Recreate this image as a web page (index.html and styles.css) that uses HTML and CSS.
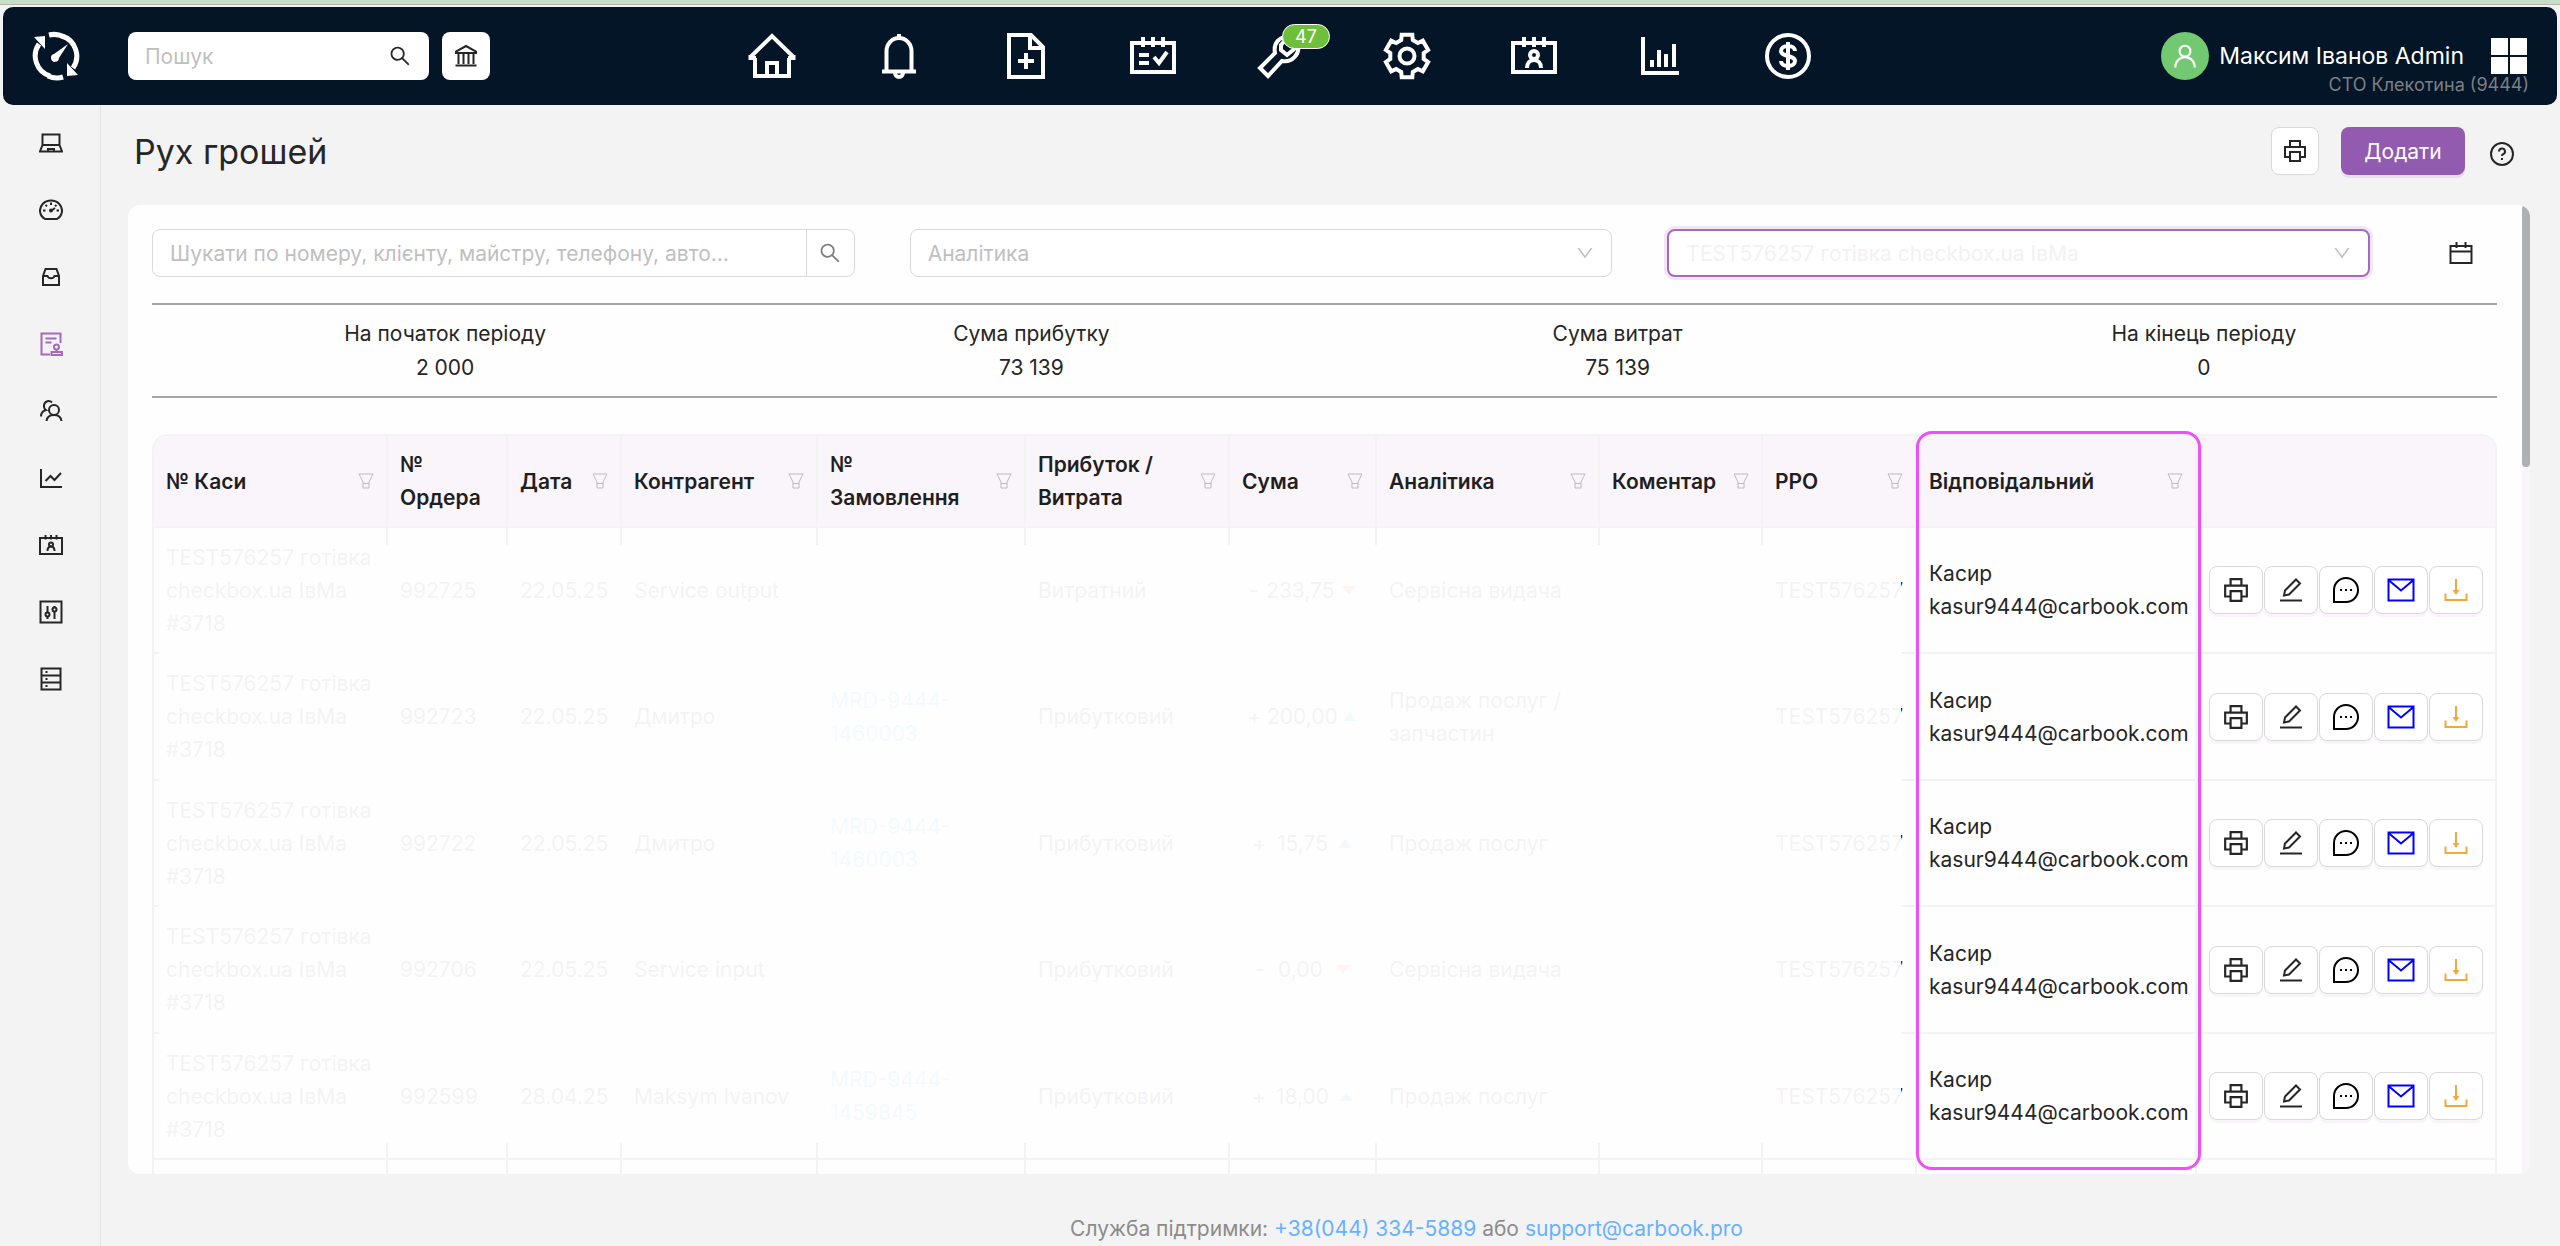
FILE: index.html
```html
<!DOCTYPE html>
<html lang="uk">
<head>
<meta charset="utf-8">
<title>Рух грошей</title>
<link rel="stylesheet" href="styles.css">
</head>
<body>
<svg class="sprite" aria-hidden="true">
  <symbol id="i-search" viewBox="0 0 1024 1024"><path fill="currentColor" d="M909.6 854.5L649.9 594.8C690.2 542.7 712 479 712 412c0-80.2-31.3-155.4-87.9-212.1-56.6-56.7-132-87.9-212.1-87.9s-155.5 31.3-212.1 87.9C143.2 256.5 112 331.8 112 412c0 80.1 31.3 155.5 87.9 212.1C256.5 680.8 331.8 712 412 712c67 0 130.6-21.8 182.7-62l259.7 259.6a8.2 8.2 0 0011.6 0l43.6-43.5a8.2 8.2 0 000-11.6zM570.4 570.4C528 612.7 471.8 636 412 636s-116-23.3-158.4-65.6C211.3 528 188 471.8 188 412s23.3-116.1 65.6-158.4C296 211.3 352.2 188 412 188s116.1 23.2 158.4 65.6S636 352.2 636 412s-23.3 116.1-65.6 158.4z"/></symbol>
  <symbol id="i-down" viewBox="0 0 1024 1024"><path fill="currentColor" d="M884 256h-75c-5.1 0-9.9 2.5-12.9 6.6L512 654.2 227.9 262.6c-3-4.1-7.8-6.6-12.9-6.6h-75c-6.500 0-10.3 7.4-6.5 12.7l352.6 486.1c12.8 17.6 39 17.6 51.7 0l352.6-486.1c3.9-5.3.1-12.7-6.4-12.7z"/></symbol>
  <symbol id="i-bank" viewBox="0 0 24 24"><path d="M2 9V7.500L12 2l10 5.500V9zM4.500 9v11M9.500 9v11M14.500 9v11M19.500 9v11M1.500 21.500h21"/></symbol>
  <symbol id="i-home" viewBox="0 0 48 48"><path d="M7 26v18h34V26M19 44V31h10v13M2.500 25L24 4l21.500 21M2.500 23V26H8M45.500 23V26H40"/></symbol>
  <symbol id="i-bell" viewBox="0 0 48 48"><path d="M11.500 39V19a12.500 13 0 0 1 25 0v20M7 39.500h34M24 2v4M20 41a4 4 0 0 0 8 0"/></symbol>
  <symbol id="i-file" viewBox="0 0 48 48"><path d="M7 3h22l12 12v30H7zM28 3v13h13M24 21v16M16 29h16"/></symbol>
  <symbol id="i-tasks" viewBox="0 0 48 48"><path d="M3 11h42v29H3zM14 5v10M24 5v10M34 5v10M10 23h10M10 31h10M25 25l5 6 8-11"/></symbol>
  <symbol id="i-wrench" viewBox="0 0 48 48"><path d="M12 44L4 36l15-15C17 11 24 4 32 5l-7 8v5l6 5 6-5 5-5c2 9-6 18-16 16z"/></symbol>
  <symbol id="i-gear" viewBox="0 0 48 48"><path d="M18.700 2.700h10.600l.5 5.300 5.100 3 4.900-2.300 5.300 9.200-4.400 3.100v6l4.400 3.100-5.300 9.200-4.900-2.300-5.100 3-.5 5.300H18.700l-.5-5.300-5.100-3-4.900 2.300-5.300-9.200L7.300 27v-6l-4.400-3.100 5.300-9.200 4.900 2.300 5.100-3z"/><circle cx="24" cy="24" r="7.500"/></symbol>
  <symbol id="i-client" viewBox="0 0 48 48"><path d="M3 11h42v29H3zM14 5v10M24 5v10M34 5v10M17 36c0-5 3-8 7-8s7 3 7 8"/><circle cx="24" cy="23" r="4"/></symbol>
  <symbol id="i-bars" viewBox="0 0 48 48"><path d="M6 5v36h36M15 35v-7M22 35V18M29 35V22M37 35V12"/></symbol>
  <symbol id="i-dollar" viewBox="0 0 48 48"><circle cx="24" cy="24" r="21"/><path d="M24 10v28M31 19c0-3-3-5-7-5s-7 2-7 5c0 6 14 4 14 10 0 3-3 5-7 5s-7-2-7-5"/></symbol>
  <symbol id="i-user" viewBox="0 0 24 24"><circle cx="12" cy="7.500" r="5"/><path d="M3 22.500c0-5.500 4-9.500 9-9.500s9 4 9 9.500"/></symbol>
  <symbol id="i-printer" viewBox="0 0 24 24"><path d="M7 8V2h10v6M6.500 18H2V8h20v10h-4.500M7 13h10v9H7z"/></symbol>
  <symbol id="i-help" viewBox="0 0 24 24"><circle cx="12" cy="12" r="11"/><path d="M9 9.500a3 3 0 1 1 4.200 2.700c-.8.4-1.200 1-1.200 1.800M12 16v2"/></symbol>
  <symbol id="i-calendar" viewBox="0 0 24 24"><path d="M1.500 5h21v17h-21zM1.500 10.500h21M7.500 1v6M16.500 1v6"/></symbol>
  <symbol id="i-filter" viewBox="0 0 16 16"><path d="M1 1h14l-4 8v6H5V9zM5 10.500h6"/></symbol>
  <symbol id="i-edit" viewBox="0 0 24 24"><path d="M1 22.500h22M5 17.500l1-5L17 1.500l4 4-11 11z"/></symbol>
  <symbol id="i-chat" viewBox="0 0 28 28"><path d="M2 26h12a12 12 0 1 0-12-12z"/><path d="M8 14h2M13 14h2M18 14h2"/></symbol>
  <symbol id="i-mail" viewBox="0 0 28 28"><path d="M1.500 3.500h25v21h-25zM1.500 4L14 14.500 26.500 4"/></symbol>
  <symbol id="i-download" viewBox="0 0 24 24"><path d="M1.500 15.500V22h21v-6.500M12 1v14"/><path fill="currentColor" stroke="none" d="M8.500 12h7L12 17z"/></symbol>
  <symbol id="i-laptop" viewBox="0 0 24 24"><path d="M3.500 3.500h17V14H3.500zM3.500 14L1 20.500h22L20.500 14M9 20v-2h6v2"/></symbol>
  <symbol id="i-dash" viewBox="0 0 24 24"><path d="M6 21h12a11 10 0 1 0-12 0zM12 13l4-3M4 12.500h2.500M17.500 12.500H20M6.500 7L8 8.200M17.500 7L16 8.200M12 4.500V7"/><circle cx="12" cy="12.500" r="1"/></symbol>
  <symbol id="i-inbox" viewBox="0 0 24 24"><path d="M4 11l2.500-7h11L20 11v9H4zM4 11h4.500c1 3 6 3 7 0H20"/></symbol>
  <symbol id="i-audit" viewBox="0 0 24 24"><path d="M11 22.500H2.500v-21h19V11M6.500 6.500h11M6.500 10.500h6M12.500 20h10.500v3H12.500zM17.500 20v-2.500"/><circle cx="17.500" cy="15" r="2.500"/></symbol>
  <symbol id="i-team" viewBox="0 0 24 24"><circle cx="15" cy="11" r="5"/><path d="M7.500 22c.5-4 3.500-6 7.500-6s7 2 7.500 6M13 3.500C10.500 1 6 2 5 6c-.3 2 .5 4 2 5-3 .8-5 3-5 6.500"/></symbol>
  <symbol id="i-line" viewBox="0 0 24 24"><path d="M2 3v18h21M6.500 15l5-5 4 4 6.500-7"/></symbol>
  <symbol id="i-card" viewBox="0 0 24 24"><path d="M1 5h22v16H1zM6.500 2v4.500M12 2v4.500M17.500 2v4.500M8.500 18c0-3 1.500-4.500 3.500-4.500s3.500 1.500 3.500 4.500"/><circle cx="12" cy="11.500" r="2"/></symbol>
  <symbol id="i-control" viewBox="0 0 24 24"><path d="M1.500 1.500h21v21h-21zM8.500 6v7M8.500 16.500V19M15.500 6v1.500M15.500 11.500V19"/><circle cx="8.500" cy="14.500" r="2"/><circle cx="15.500" cy="9.500" r="2"/></symbol>
  <symbol id="i-db" viewBox="0 0 24 24"><path d="M2.500 1.500h19v21h-19zM2.500 8.500h19M2.500 15.500h19M6.500 5h2M6.500 12h2M6.500 19h2"/></symbol>
</svg>

<div class="browser-edge"></div>

<header class="topbar">
  <div class="top-left">
    <a class="logo" href="#" aria-label="Carbook">
      <svg viewBox="0 0 50 50"><path d="M8 13A21 21 0 0 0 19 45M42 37A21 21 0 0 0 31 5" fill="none" stroke="currentColor" stroke-width="5"/><path d="M18 4a21 21 0 0 1 15 2M32 46a21 21 0 0 1-15-1" fill="none" stroke="currentColor" stroke-width="5"/><path fill="currentColor" d="M3 6l11-1v13zM47 44l-11 1V32zM37 13L28 27a4 4 0 1 1-5-4z"/></svg>
    </a>
    <label class="global-search">
      <input type="text" placeholder="Пошук" aria-label="Пошук">
      <svg class="icon s24"><use href="#i-search"/></svg>
    </label>
    <button class="bank" aria-label="Каса"><svg class="icon s24"><use href="#i-bank"/></svg></button>
  </div>
  <nav class="main-nav">
    <a href="#"><svg class="icon"><use href="#i-home"/></svg></a>
    <a href="#"><svg class="icon"><use href="#i-bell"/></svg></a>
    <a href="#"><svg class="icon"><use href="#i-file"/></svg></a>
    <a href="#"><svg class="icon"><use href="#i-tasks"/></svg></a>
    <a href="#"><svg class="icon"><use href="#i-wrench"/></svg><span class="badge">47</span></a>
    <a href="#"><svg class="icon"><use href="#i-gear"/></svg></a>
    <a href="#"><svg class="icon"><use href="#i-client"/></svg></a>
    <a href="#"><svg class="icon"><use href="#i-bars"/></svg></a>
    <a href="#"><svg class="icon"><use href="#i-dollar"/></svg></a>
  </nav>
  <div class="account">
    <div class="account-row">
      <span class="avatar"><svg class="icon s26"><use href="#i-user"/></svg></span>
      <span class="account-name">Максим Іванов Admin</span>
      <button class="apps" aria-label="Меню"><i></i><i></i><i></i><i></i></button>
    </div>
    <span class="account-sto">СТО Клекотина (9444)</span>
  </div>
</header>

<div class="shell">
  <nav class="sidebar">
    <a href="#"><svg class="icon s24"><use href="#i-laptop"/></svg></a>
    <a href="#"><svg class="icon s24"><use href="#i-dash"/></svg></a>
    <a href="#"><svg class="icon s24"><use href="#i-inbox"/></svg></a>
    <a href="#" class="active"><svg class="icon s24"><use href="#i-audit"/></svg></a>
    <a href="#"><svg class="icon s24"><use href="#i-team"/></svg></a>
    <a href="#"><svg class="icon s24"><use href="#i-line"/></svg></a>
    <a href="#"><svg class="icon s24"><use href="#i-card"/></svg></a>
    <a href="#"><svg class="icon s24"><use href="#i-control"/></svg></a>
    <a href="#"><svg class="icon s24"><use href="#i-db"/></svg></a>
  </nav>

  <div class="page">
    <div class="page-head">
      <h1>Рух грошей</h1>
      <button class="btn print" aria-label="Друк"><svg class="icon s24"><use href="#i-printer"/></svg></button>
      <button class="btn primary">Додати</button>
      <a class="help" href="#" aria-label="Довідка"><svg class="icon s24"><use href="#i-help"/></svg></a>
    </div>

    <main class="card">
      <div class="card-body">
        <div class="filters">
          <div class="search-field">
            <input type="text" placeholder="Шукати по номеру, клієнту, майстру, телефону, авто..." aria-label="Пошук касових ордерів">
            <button aria-label="Шукати"><svg class="icon s24"><use href="#i-search"/></svg></button>
          </div>
          <label class="select"><select aria-label="Аналітика"><option>Аналітика</option></select><svg class="icon s20"><use href="#i-down"/></svg></label>
          <label class="select focused"><select aria-label="Каса"><option>TEST576257 готівка checkbox.ua ІвМа</option></select><svg class="icon s20"><use href="#i-down"/></svg></label>
          <button class="date" aria-label="Період"><svg class="icon s24"><use href="#i-calendar"/></svg></button>
        </div>

        <div class="totals">
          <div>На початок періоду<br>2 000</div>
          <div>Сума прибутку<br>73 139</div>
          <div>Сума витрат<br>75 139</div>
          <div>На кінець періоду<br>0</div>
        </div>

        <div class="table-wrap">
          <table>
            <colgroup><col class="c-cash"><col class="c-order"><col class="c-date"><col class="c-party"><col class="c-job"><col class="c-type"><col class="c-sum"><col class="c-analytics"><col class="c-comment"><col class="c-rro"><col class="c-resp"><col class="c-actions"></colgroup>
            <thead>
              <tr>
                <th><div class="th">№ Каси<svg class="icon filter"><use href="#i-filter"/></svg></div></th>
                <th><div class="th">№ Ордера</div></th>
                <th><div class="th">Дата<svg class="icon filter"><use href="#i-filter"/></svg></div></th>
                <th><div class="th">Контрагент<svg class="icon filter"><use href="#i-filter"/></svg></div></th>
                <th><div class="th"><span>№<br>Замовлення</span><svg class="icon filter"><use href="#i-filter"/></svg></div></th>
                <th><div class="th">Прибуток / Витрата<svg class="icon filter"><use href="#i-filter"/></svg></div></th>
                <th><div class="th">Сума<svg class="icon filter"><use href="#i-filter"/></svg></div></th>
                <th><div class="th">Аналітика<svg class="icon filter"><use href="#i-filter"/></svg></div></th>
                <th><div class="th">Коментар<svg class="icon filter"><use href="#i-filter"/></svg></div></th>
                <th><div class="th">РРО<svg class="icon filter"><use href="#i-filter"/></svg></div></th>
                <th><div class="th">Відповідальний<svg class="icon filter"><use href="#i-filter"/></svg></div></th>
                <th></th>
              </tr>
            </thead>
            <tbody>
              <tr>
                <td>TEST576257 готівка checkbox.ua ІвМа #3718</td><td>992725</td><td>22.05.25</td><td>Service output</td><td></td><td>Витратний</td>
                <td><div class="sum down"><span>-</span><span>233,75</span></div></td><td>Сервісна видача</td><td></td><td>TEST576257</td><td>Касир<br>kasur9444@carbook.com</td>
                <td><div class="actions"><button aria-label="Друк"><svg class="icon s26"><use href="#i-printer"/></svg></button><button aria-label="Редагувати"><svg class="icon s24"><use href="#i-edit"/></svg></button><button class="chat" aria-label="Чат"><svg class="icon s28"><use href="#i-chat"/></svg></button><button class="mail" aria-label="Лист"><svg class="icon s28"><use href="#i-mail"/></svg></button><button class="download" aria-label="Завантажити"><svg class="icon s24"><use href="#i-download"/></svg></button></div></td>
              </tr>
              <tr>
                <td>TEST576257 готівка checkbox.ua ІвМа #3718</td><td>992723</td><td>22.05.25</td><td>Дмитро</td><td><a href="#">MRD-9444-1460003</a></td><td>Прибутковий</td>
                <td><div class="sum up"><span>+</span><span>200,00</span></div></td><td>Продаж послуг / запчастин</td><td></td><td>TEST576257</td><td>Касир<br>kasur9444@carbook.com</td>
                <td><div class="actions"><button aria-label="Друк"><svg class="icon s26"><use href="#i-printer"/></svg></button><button aria-label="Редагувати"><svg class="icon s24"><use href="#i-edit"/></svg></button><button class="chat" aria-label="Чат"><svg class="icon s28"><use href="#i-chat"/></svg></button><button class="mail" aria-label="Лист"><svg class="icon s28"><use href="#i-mail"/></svg></button><button class="download" aria-label="Завантажити"><svg class="icon s24"><use href="#i-download"/></svg></button></div></td>
              </tr>
              <tr>
                <td>TEST576257 готівка checkbox.ua ІвМа #3718</td><td>992722</td><td>22.05.25</td><td>Дмитро</td><td><a href="#">MRD-9444-1460003</a></td><td>Прибутковий</td>
                <td><div class="sum up"><span>+</span><span>15,75</span></div></td><td>Продаж послуг</td><td></td><td>TEST576257</td><td>Касир<br>kasur9444@carbook.com</td>
                <td><div class="actions"><button aria-label="Друк"><svg class="icon s26"><use href="#i-printer"/></svg></button><button aria-label="Редагувати"><svg class="icon s24"><use href="#i-edit"/></svg></button><button class="chat" aria-label="Чат"><svg class="icon s28"><use href="#i-chat"/></svg></button><button class="mail" aria-label="Лист"><svg class="icon s28"><use href="#i-mail"/></svg></button><button class="download" aria-label="Завантажити"><svg class="icon s24"><use href="#i-download"/></svg></button></div></td>
              </tr>
              <tr>
                <td>TEST576257 готівка checkbox.ua ІвМа #3718</td><td>992706</td><td>22.05.25</td><td>Service input</td><td></td><td>Прибутковий</td>
                <td><div class="sum down"><span>-</span><span>0,00</span></div></td><td>Сервісна видача</td><td></td><td>TEST576257</td><td>Касир<br>kasur9444@carbook.com</td>
                <td><div class="actions"><button aria-label="Друк"><svg class="icon s26"><use href="#i-printer"/></svg></button><button aria-label="Редагувати"><svg class="icon s24"><use href="#i-edit"/></svg></button><button class="chat" aria-label="Чат"><svg class="icon s28"><use href="#i-chat"/></svg></button><button class="mail" aria-label="Лист"><svg class="icon s28"><use href="#i-mail"/></svg></button><button class="download" aria-label="Завантажити"><svg class="icon s24"><use href="#i-download"/></svg></button></div></td>
              </tr>
              <tr>
                <td>TEST576257 готівка checkbox.ua ІвМа #3718</td><td>992599</td><td>28.04.25</td><td>Maksym Ivanov</td><td><a href="#">MRD-9444-1459845</a></td><td>Прибутковий</td>
                <td><div class="sum up"><span>+</span><span>18,00</span></div></td><td>Продаж послуг</td><td></td><td>TEST576257</td><td>Касир<br>kasur9444@carbook.com</td>
                <td><div class="actions"><button aria-label="Друк"><svg class="icon s26"><use href="#i-printer"/></svg></button><button aria-label="Редагувати"><svg class="icon s24"><use href="#i-edit"/></svg></button><button class="chat" aria-label="Чат"><svg class="icon s28"><use href="#i-chat"/></svg></button><button class="mail" aria-label="Лист"><svg class="icon s28"><use href="#i-mail"/></svg></button><button class="download" aria-label="Завантажити"><svg class="icon s24"><use href="#i-download"/></svg></button></div></td>
              </tr>
              <tr><td></td><td></td><td></td><td></td><td></td><td></td><td></td><td></td><td></td><td></td><td></td><td></td></tr>
            </tbody>
          </table>
          <div class="veil"></div>
          <div class="highlight"></div>
        </div>
      </div>
      <div class="scroll"><div class="thumb"></div></div>
    </main>

    <footer>Служба підтримки: <a href="tel:+380443345889">+38(044) 334-5889</a> або <a href="mailto:support@carbook.pro">support@carbook.pro</a></footer>
  </div>
</div>
</body>
</html>
```
FILE: styles.css
```css
* { box-sizing: border-box; }

body {
  margin: 0;
  height: 100vh;
  display: flex;
  flex-direction: column;
  overflow: hidden;
  background: #f3f3f3;
  color: #262626;
  font: 21px/33px Inter, "Liberation Sans", sans-serif;
}

button, input, select { font: inherit; color: inherit; margin: 0; }
button { padding: 0; border: 0; background: none; display: flex; align-items: center; justify-content: center; }
a { text-decoration: none; color: inherit; }

.sprite { position: absolute; width: 0; height: 0; }
.icon { flex: none; fill: none; stroke: currentColor; stroke-width: 2; display: block; }
.icon use[href="#i-search"], .icon use[href="#i-down"] { stroke: none; }
.s20 { width: 20px; height: 20px; }
.s24 { width: 24px; height: 24px; }
.s26 { width: 26px; height: 26px; }
.s28 { width: 28px; height: 28px; }

.browser-edge { flex: none; height: 5px; margin-bottom: 2px; background: #c8dfc6; border-bottom: 1px solid #b3bab4; }

/* top bar */
.topbar {
  flex: none;
  height: 98px;
  margin: 0 3px;
  padding: 0 28px;
  display: grid;
  grid-template-columns: 1fr auto 1fr;
  align-items: center;
  background: #041527;
  border-radius: 10px;
  color: #fff;
}
.top-left { display: flex; align-items: center; }
.logo { width: 50px; height: 50px; margin-right: 47px; }
.logo svg { display: block; }
.global-search {
  width: 301px; height: 48px; margin-right: 13px; padding: 0 17px;
  display: flex; align-items: center;
  background: #fff; border-radius: 8px; color: #262626;
}
.global-search input { flex: 1; min-width: 0; border: 0; outline: 0; padding: 0; background: none; }
::placeholder { color: #bfbfbf; opacity: 1; }
.bank { width: 48px; height: 48px; background: #fff; color: #262626; border-radius: 8px; }
.main-nav { display: flex; gap: 79px; }
.main-nav a { position: relative; }
.main-nav .icon { width: 48px; height: 48px; stroke-width: 4; }
.badge {
  position: absolute; left: 26px; top: -8px;
  padding: 0 12px; height: 25px; line-height: 23px; font-size: 18px;
  background: #6fbf3b; border: 1px solid #fff; border-radius: 13px;
}
.account { align-self: stretch; display: flex; flex-direction: column; align-items: flex-end; padding-top: 25px; }
.account-row { display: flex; align-items: center; height: 48px; padding-right: 2px; }
.avatar { width: 48px; height: 48px; margin-right: 10px; border-radius: 50%; background: #72c972; display: flex; align-items: center; justify-content: center; }
.account-name { font-size: 23px; white-space: nowrap; margin-right: 27px; }
.apps { display: grid; grid-template-columns: 17px 17px; gap: 2px; }
.apps i { height: 17px; background: #fff; }
.account-sto { margin-top: -6px; font-size: 18px; line-height: 22px; color: #7c7f84; white-space: nowrap; }

/* side menu */
.shell { flex: 1; min-height: 0; display: flex; }
.sidebar { flex: none; width: 101px; padding: 4px 0 0 2px; border-right: 1px solid #e4e4e4; }
.sidebar a { height: 67px; display: flex; align-items: center; justify-content: center; }
.sidebar .active { color: #a569bd; }

.page { flex: 1; min-width: 0; display: flex; flex-direction: column; }
.page-head { flex: none; height: 100px; padding: 0 46px 8px 33px; display: flex; align-items: center; }
h1 { flex: 1; margin: 0; padding-top: 2px; font-size: 34px; font-weight: 400; line-height: 48px; }
.btn { height: 48px; border-radius: 8px; }
.print { width: 48px; margin-right: 22px; background: #fff; border: 1px solid #d9d9d9; }
.primary { width: 124px; margin-right: 25px; background: #935bb0; color: #fff; box-shadow: 0 3px 0 #e9ddee; }
.help .icon { margin-top: 6px; }

/* card */
.card { flex: 1; min-height: 0; margin: 0 30px 0 27px; display: flex; background: #fefefe; border-radius: 12px; overflow: hidden; }
.card-body { flex: 1; min-width: 0; padding: 24px 25px 0 24px; }
.scroll { flex: none; width: 8px; background: #f9f3fa; }
.thumb { height: 27%; background: #adb1b1; border-radius: 4px; }

.filters { display: grid; grid-template-columns: repeat(3, 1fr) 72px; gap: 55px; height: 48px; }
.search-field, .select { min-width: 0; height: 48px; display: flex; align-items: center; border: 1px solid #d9d9d9; border-radius: 8px; background: #fff; }
.search-field input { flex: 1; min-width: 0; height: 100%; border: 0; outline: 0; padding: 0 17px; background: none; }
.search-field button { width: 48px; height: 100%; border-left: 1px solid #d9d9d9; color: #7f7f7f; }
.select { padding-right: 16px; color: #bfbfbf; }
.select select { flex: 1; min-width: 0; height: 100%; appearance: none; border: 0; outline: 0; padding: 0 17px; background: none; color: #bfbfbf; opacity: 1; }
.focused { border: 2px solid #a569bd; box-shadow: 0 0 0 3px #f1e6f5; }
.select.focused select { color: #f3f1f4; }

.totals { margin-top: 26px; padding: 12px 0 11px; display: grid; grid-template-columns: repeat(4, 1fr); line-height: 34px; text-align: center; border: solid #a6a6a6; border-width: 2px 0; }

/* table */
.table-wrap { position: relative; margin-top: 36px; }
table { width: 100%; table-layout: fixed; border-collapse: separate; border-spacing: 0; border: 2px solid #f3f3f4; border-bottom: 0; border-radius: 16px 16px 0 0; overflow: hidden; }
.c-cash { width: 234px; }
.c-order { width: 120px; }
.c-date { width: 114px; }
.c-party { width: 196px; }
.c-job { width: 208px; }
.c-type { width: 204px; }
.c-sum { width: 147px; }
.c-comment { width: 163px; }
.c-rro { width: 154px; }
.c-resp { width: 280px; }
.c-actions { width: 298px; }
th, td { padding: 0 12px; text-align: left; border: solid #f3f3f4; border-width: 0 2px 2px 0; }
th:last-child, td:last-child { border-right: 0; }
th { height: 92px; background: #faf4fb; font-weight: 600; color: #1f1f1f; }
td { height: 126px; }
tr:nth-child(even) td { height: 127px; }
.th { display: flex; align-items: center; justify-content: space-between; }
.filter { width: 16px; height: 16px; color: #bdbac0; stroke-width: 1; }
td a { color: #1ea7fd; }
.sum { display: flex; align-items: center; justify-content: space-evenly; }
.sum::after { content: ""; border: 7px solid transparent; }
.up::after { border-width: 0 7px 9px; border-bottom-color: #1ea7fd; }
.down::after { border-width: 9px 7px 0; border-top-color: #fa541c; }

.actions { display: flex; gap: 1px; }
.actions button { width: 54px; height: 48px; border: 1px solid #d9d9d9; border-radius: 8px; background: #fff; box-shadow: 0 3px 0 #f9f4fa; }
.actions .chat { color: #000; }
.actions .mail { color: #00f; }
.actions .download { color: #f5a83a; }

/* faded out part of the table and the framed column */
.veil { position: absolute; left: 7px; right: 596px; top: 111px; height: 598px; background: rgba(254, 254, 254, .95); }
.highlight { position: absolute; right: 296px; top: -3px; width: 285px; height: 739px; border: 3px solid #ee4ff6; border-radius: 16px; }

footer { flex: none; height: 72px; padding: 38px 0 0 152px; text-align: center; white-space: nowrap; color: #8c8c8c; }
footer a { color: #69b1ff; }
```
